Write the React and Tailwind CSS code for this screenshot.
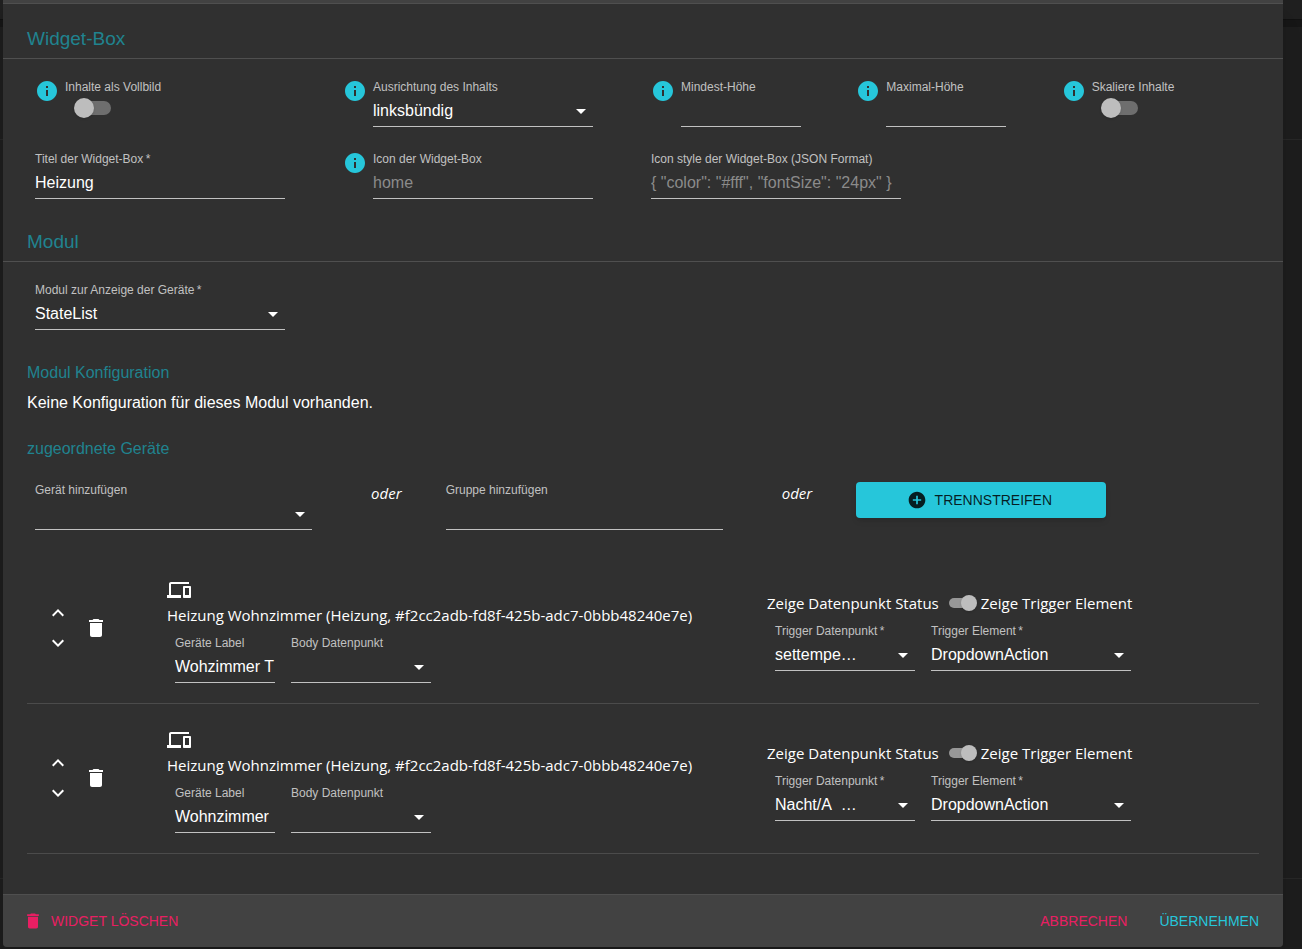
import { useState } from 'react';
import { MdInfo, MdArrowDropDown, MdAddCircle, MdDelete, MdDevices, MdExpandLess, MdExpandMore } from 'react-icons/md';

const devices = [
    { id: 1, label: 'Wohzimmer T', trigger: 'settempe…' },
    { id: 2, label: 'Wohnzimmer', trigger: 'Nacht/A\u00a0\u00a0…' },
];

const Label = ({ id, required, children }) => (
    <label htmlFor={id} className="block h-4 text-xs leading-4 text-[#c1c1c1] whitespace-nowrap">
        {children}
        {required && '\u2009*'}
    </label>
);

const TextField = ({ id, label, required, value, placeholder, width }) => (
    <div className={width}>
        <Label id={id} required={required}>{label}</Label>
        <input
            id={id}
            type="text"
            defaultValue={value}
            placeholder={placeholder}
            className="block w-full h-8 text-base text-white placeholder:text-[#8b8b8b] bg-transparent border-b border-[#c1c1c1] outline-none"
        />
    </div>
);

const SelectField = ({ id, label, required, value, width }) => (
    <div className={width}>
        <Label id={id} required={required}>{label}</Label>
        <div className="relative">
            <select
                id={id}
                defaultValue={value}
                className="block w-full h-8 pr-6 text-base text-white appearance-none bg-transparent border-b border-[#c1c1c1] outline-none"
            >
                <option value={value}>{value}</option>
            </select>
            <MdArrowDropDown className="absolute right-0 top-1 h-6 w-6 text-white pointer-events-none" />
        </div>
    </div>
);

const SwitchField = ({ id, label }) => {
    const [checked, setChecked] = useState(false);

    return (
        <div>
            <Label id={id}>{label}</Label>
            <div className="relative flex items-center ml-[9px] h-[26px] w-[37px]">
                <input
                    id={id}
                    type="checkbox"
                    role="switch"
                    checked={checked}
                    onChange={() => setChecked(!checked)}
                    className="peer ml-[3px] h-3.5 w-[34px] appearance-none rounded-full bg-[#6e6e6e] cursor-pointer"
                />
                <span className="absolute left-0 h-5 w-5 rounded-full bg-[#bdbdbd] shadow pointer-events-none peer-checked:left-5" />
            </div>
        </div>
    );
};

const WithInfo = ({ children }) => (
    <div className="flex items-start gap-1.5 pl-2">
        <button type="button" aria-label="Info" className="cursor-pointer">
            <MdInfo className="h-6 w-6 text-[#26c6da]" />
        </button>
        {children}
    </div>
);

const SectionTitle = ({ children }) => (
    <h2 className="flex items-end px-6 pb-[7px] h-[55px] text-[19px] leading-6 text-[#20838f] border-b border-[#4f4f4f]">
        {children}
    </h2>
);

const Device = ({ id, label, trigger }) => {
    const [showTrigger, setShowTrigger] = useState(true);

    return (
        <li className="grid grid-cols-[140px_600fr_492fr] items-center pt-6 pb-5 border-b border-[#4b4b4b]">
            <div className="flex items-center gap-3.5 pl-[19px] pb-1.5 text-white">
                <div className="flex flex-col gap-1.5">
                    <button type="button" aria-label="Nach oben" className="cursor-pointer">
                        <MdExpandLess className="h-6 w-6" />
                    </button>
                    <button type="button" aria-label="Nach unten" className="cursor-pointer">
                        <MdExpandMore className="h-6 w-6" />
                    </button>
                </div>
                <button type="button" aria-label="Entfernen" className="cursor-pointer">
                    <MdDelete className="h-6 w-6" />
                </button>
            </div>

            <div>
                <MdDevices className="h-6 w-6 text-white" />
                <p className="font-['Open_Sans',sans-serif] text-[15px] leading-[26px] text-white whitespace-nowrap">
                    Heizung Wohnzimmer (Heizung, #f2cc2adb-fd8f-425b-adc7-0bbb48240e7e)
                </p>
                <div className="flex gap-4 pl-2 mt-[7px]">
                    <TextField id={`label-${id}`} label="Geräte Label" value={label} width="w-[100px]" />
                    <SelectField id={`body-${id}`} label="Body Datenpunkt" value="" width="w-[140px]" />
                </div>
            </div>

            <div>
                <div className="flex items-center font-['Open_Sans',sans-serif] text-[15px] leading-[26px] text-white whitespace-nowrap">
                    <label htmlFor={`show-${id}`}>Zeige Datenpunkt Status</label>
                    <div className="relative flex items-center ml-1.5 mr-1 w-8 h-6 pl-1">
                        <input
                            id={`show-${id}`}
                            type="checkbox"
                            role="switch"
                            checked={showTrigger}
                            onChange={() => setShowTrigger(!showTrigger)}
                            className="peer h-2.5 w-[26px] appearance-none rounded-full bg-[#979797] cursor-pointer"
                        />
                        <span className="absolute left-0.5 h-4 w-4 rounded-full bg-[#bdbdbd] shadow pointer-events-none peer-checked:left-4" />
                    </div>
                    <label htmlFor={`show-${id}`}>Zeige Trigger Element</label>
                </div>
                <div className="flex gap-4 pl-2 mt-[7px]">
                    <SelectField id={`trigger-${id}`} label="Trigger Datenpunkt" required value={trigger} width="w-[140px]" />
                    <SelectField id={`element-${id}`} label="Trigger Element" required value="DropdownAction" width="w-[200px]" />
                </div>
            </div>
        </li>
    );
};

// Dimmed page that stays visible at the edges of the dialog
const Backdrop = () => (
    <div className="absolute inset-0 flex flex-col bg-[#1d1d1d]" aria-hidden="true">
        <div className="h-5 bg-[#1f1f1f] border-b border-[#111111]" />
        <div className="h-[7px] bg-[#161616]" />
        <div className="h-[113px] border-b border-[#272727]" />
        <div className="flex-1 border-b border-[#272727]" />
        <div className="h-[70px]" />
    </div>
);

export default function App() {
    return (
        <div className="relative min-h-screen pl-[3px] pr-[19px] pb-0.5 font-['Liberation_Sans',Arial,sans-serif]">
            <Backdrop />
            <form className="relative rounded-b bg-[#303030] shadow-xl" onSubmit={(e) => e.preventDefault()}>
                <div className="h-1 bg-[#424242] border-b border-[#4f4f4f]" />

                <SectionTitle>Widget-Box</SectionTitle>
                <div className="grid grid-cols-12 gap-y-6 px-6 pt-5 pb-2">
                    <div className="col-span-3">
                        <WithInfo>
                            <SwitchField id="fullscreen" label="Inhalte als Vollbild" />
                        </WithInfo>
                    </div>
                    <div className="col-span-3">
                        <WithInfo>
                            <SelectField id="align" label="Ausrichtung des Inhalts" value="linksbündig" width="w-[220px]" />
                        </WithInfo>
                    </div>
                    <div className="col-span-2">
                        <WithInfo>
                            <TextField id="min-height" label="Mindest-Höhe" width="w-[120px]" />
                        </WithInfo>
                    </div>
                    <div className="col-span-2">
                        <WithInfo>
                            <TextField id="max-height" label="Maximal-Höhe" width="w-[120px]" />
                        </WithInfo>
                    </div>
                    <div className="col-span-2">
                        <WithInfo>
                            <SwitchField id="scale" label="Skaliere Inhalte" />
                        </WithInfo>
                    </div>

                    <div className="col-span-3 pl-2">
                        <TextField id="title" label="Titel der Widget-Box" required value="Heizung" width="w-[250px]" />
                    </div>
                    <div className="col-span-3">
                        <WithInfo>
                            <TextField id="icon" label="Icon der Widget-Box" placeholder="home" width="w-[220px]" />
                        </WithInfo>
                    </div>
                    <div className="col-span-3 pl-2">
                        <TextField
                            id="icon-style"
                            label="Icon style der Widget-Box (JSON Format)"
                            placeholder={'{ "color": "#fff", "fontSize": "24px" }'}
                            width="w-[250px]"
                        />
                    </div>
                </div>

                <SectionTitle>Modul</SectionTitle>
                <div className="px-6 pt-5 pb-10">
                    <div className="pl-2">
                        <SelectField id="module" label="Modul zur Anzeige der Geräte" required value="StateList" width="w-[250px]" />
                    </div>

                    <h3 className="mt-[31px] text-base leading-6 text-[#20838f]">Modul Konfiguration</h3>
                    <p className="mt-1.5 text-base leading-6 text-white">Keine Konfiguration für dieses Modul vorhanden.</p>

                    <h3 className="mt-[22px] text-base leading-6 text-[#20838f]">zugeordnete Geräte</h3>
                    <div className="grid grid-cols-12 mt-[21px]">
                        <div className="col-span-3 pl-2 pr-[23px]">
                            <SelectField id="add-device" label="Gerät hinzufügen" value="" width="w-full" />
                        </div>
                        <em className="font-['Open_Sans',sans-serif] text-[15px] leading-[22px] text-center text-white">oder</em>
                        <div className="col-span-3 pl-2 pr-[23px]">
                            <TextField id="add-group" label="Gruppe hinzufügen" width="w-full" />
                        </div>
                        <em className="font-['Open_Sans',sans-serif] text-[15px] leading-[22px] text-center text-white">oder</em>
                        <div className="col-span-4 pl-2">
                            <button
                                type="button"
                                className="flex items-center justify-center gap-2 w-[250px] h-9 pr-1 rounded bg-[#26c6da] text-sm text-black/85 shadow-md cursor-pointer"
                            >
                                <MdAddCircle className="h-5 w-5" />
                                TRENNSTREIFEN
                            </button>
                        </div>
                    </div>

                    <ul className="mt-6">
                        {devices.map((device) => (
                            <Device key={device.id} {...device} />
                        ))}
                    </ul>
                </div>

                <div className="flex items-center h-[53px] pl-5 pr-6 rounded-b bg-[#424242] border-t border-[#4f4f4f] text-sm">
                    <button type="button" className="flex items-center gap-2 text-[#e91e63] cursor-pointer">
                        <MdDelete className="h-5 w-5" />
                        WIDGET LÖSCHEN
                    </button>
                    <div className="flex gap-8 ml-auto">
                        <button type="button" className="text-[#e91e63] cursor-pointer">ABBRECHEN</button>
                        <button type="submit" className="text-[#26c6da] cursor-pointer">ÜBERNEHMEN</button>
                    </div>
                </div>
            </form>
        </div>
    );
}
